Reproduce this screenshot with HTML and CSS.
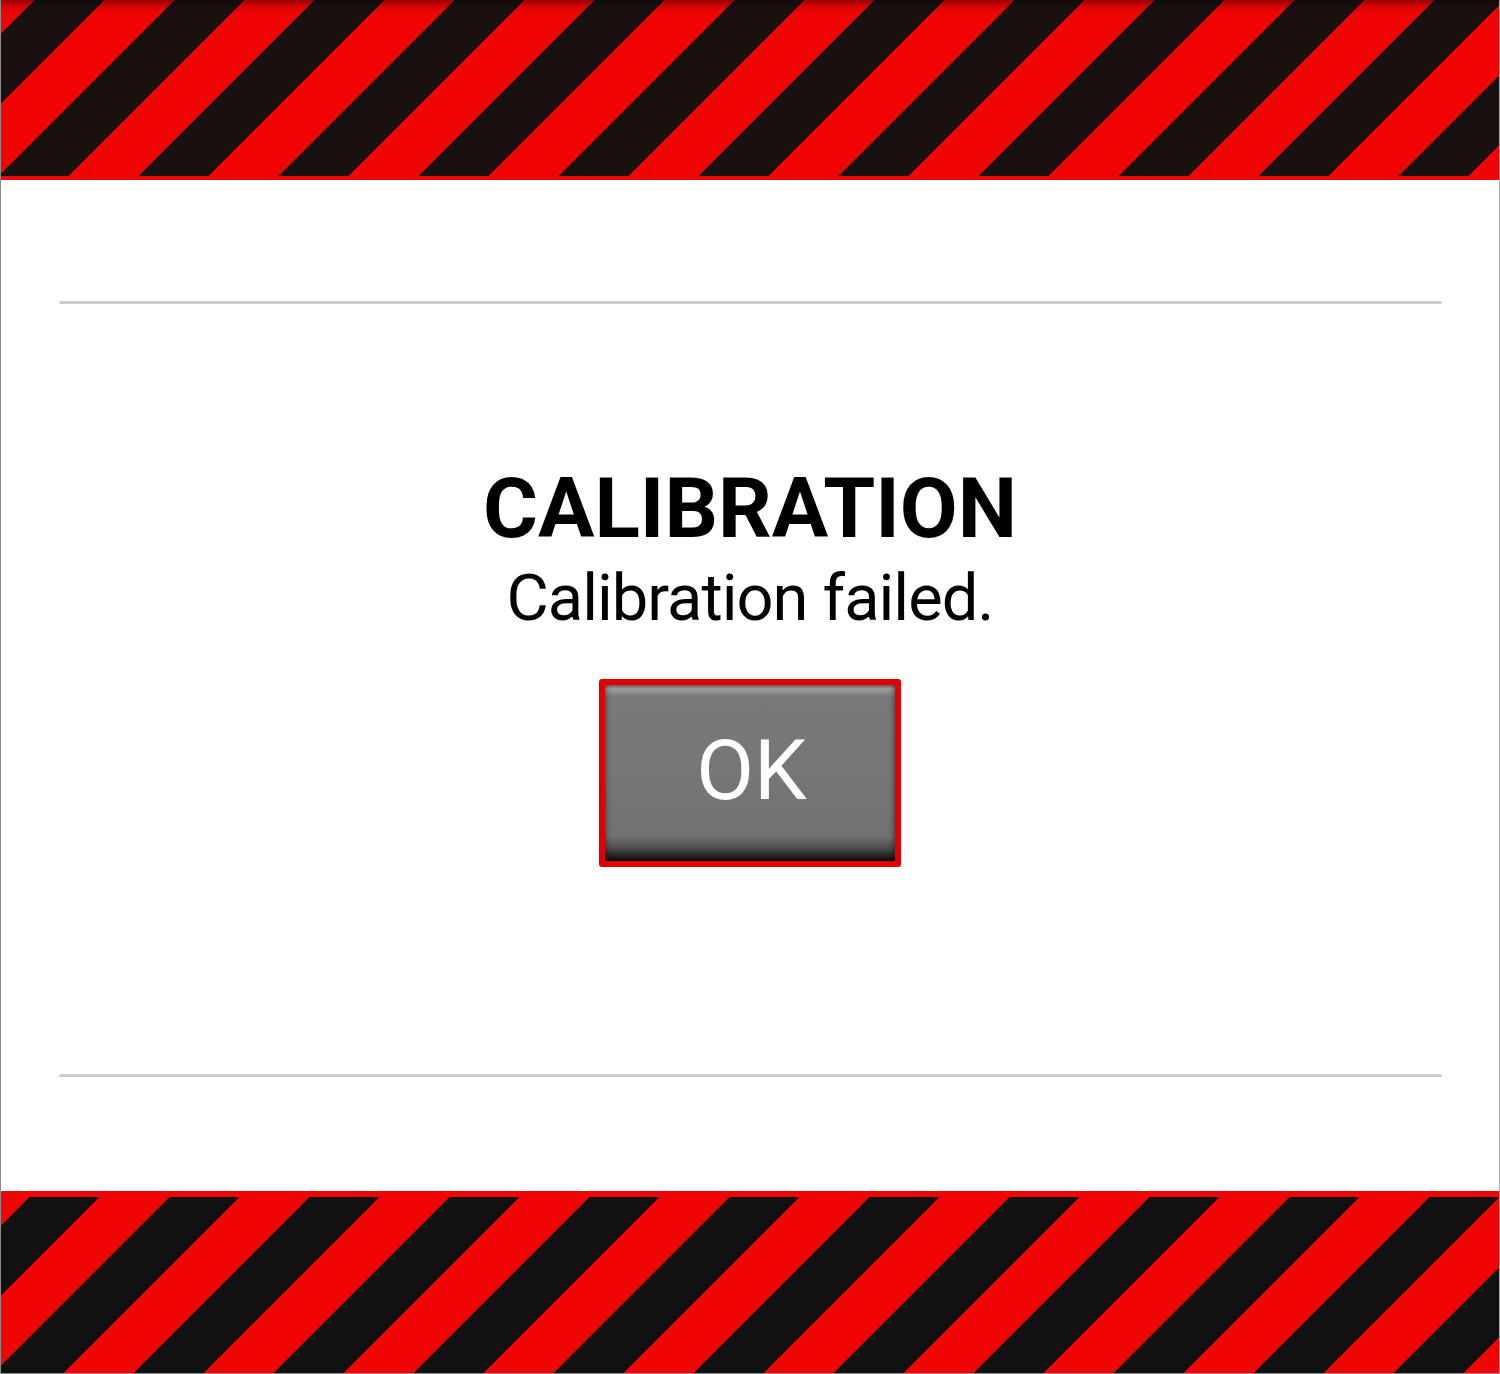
FILE: index.html
```html
<!DOCTYPE html>
<html lang="en">
<head>
<meta charset="utf-8">
<title>Calibration</title>
<link rel="stylesheet" href="styles.css">
</head>
<body>
<div class="screen">
  <div class="hazard hazard-top"></div>
  <main class="panel">
    <hr class="rule">
    <section class="message">
      <h1 class="title">CALIBRATION</h1>
      <p class="detail">Calibration failed.</p>
      <button class="ok-btn" type="button"><span class="ok-face">OK</span></button>
    </section>
    <hr class="rule">
  </main>
  <div class="hazard hazard-bottom"></div>
</div>
</body>
</html>
```
FILE: styles.css
```css
html, body {
  margin: 0;
  padding: 0;
  background: #ffffff;
}

body {
  font-family: Roboto, "Liberation Sans", sans-serif;
  color: #000;
}

.screen {
  width: 1500px;
  height: 1374px;
  box-sizing: border-box;
  border-left: 1px solid #8c8c8c;
  border-right: 1px solid #a8a8a8;
  border-bottom: 1px solid #8c8c8c;
  display: flex;
  flex-direction: column;
  overflow: hidden;
}

/* diagonal warning stripes, one 140px tile = two red + two black bands */
.hazard {
  flex: none;
  background-repeat: repeat;
  background-size: 140px 140px;
}

.hazard-top {
  height: 176px;
  border-bottom: 4px solid #f00404;
  background-image:
    linear-gradient(to bottom, rgba(0, 0, 0, 0.38) 0, rgba(0, 0, 0, 0.12) 6px, rgba(0, 0, 0, 0) 14px),
    linear-gradient(135deg, #f00404 0 25%, #1a1010 25% 50%, #f00404 50% 75%, #1a1010 75% 100%);
  background-size: 100% 100%, 140px 140px;
  background-repeat: no-repeat, repeat;
  background-position: 0 0, -37px 0;
}

.hazard-bottom {
  height: 176px;
  border-top: 6px solid #f00404;
  background-image:
    linear-gradient(135deg, #f00404 0 25%, #111111 25% 50%, #f00404 50% 75%, #111111 75% 100%);
  background-position: -42px 0;
}

.panel {
  flex: 1;
  display: flex;
  flex-direction: column;
  padding-top: 121px;
  padding-bottom: 114px;
}

.rule {
  flex: none;
  height: 3px;
  margin: 0 57px 0 58px;
  border: 0;
  border-radius: 2px;
  background: #cccccc;
}

.message {
  flex: 1;
  display: flex;
  flex-direction: column;
  align-items: center;
  padding-top: 163px;
}

.title {
  margin: 0;
  font-size: 84px;
  line-height: 84px;
  font-weight: 700;
  letter-spacing: 0;
}

.detail {
  margin: 15px 0 0;
  font-size: 65px;
  line-height: 65px;
  font-weight: 400;
  letter-spacing: -1px;
}

.ok-btn {
  margin-top: 48px;
  width: 302px;
  height: 188px;
  padding: 0;
  box-sizing: border-box;
  border: 6px solid #e20000;
  border-radius: 3px;
  background: #e20000;
  cursor: pointer;
  display: flex;
}

.ok-face {
  flex: 1;
  display: flex;
  align-items: center;
  justify-content: center;
  padding-bottom: 6px;
  padding-left: 3px;
  color: #ffffff;
  font-family: Roboto, "Liberation Sans", sans-serif;
  font-size: 84px;
  font-weight: 400;
  background: linear-gradient(to bottom,
    #6a6a6a 0,
    #9c9c9c 4px,
    #8a8a8a 8px,
    #797979 12px,
    #767676 50%,
    #717171 86%,
    #4a4a4a 93%,
    #1c1c1c 98%,
    #0c0c0c 100%);
  box-shadow:
    inset 4px 0 4px -2px rgba(0, 0, 0, 0.35),
    inset -4px 0 4px -2px rgba(0, 0, 0, 0.35);
}
```
